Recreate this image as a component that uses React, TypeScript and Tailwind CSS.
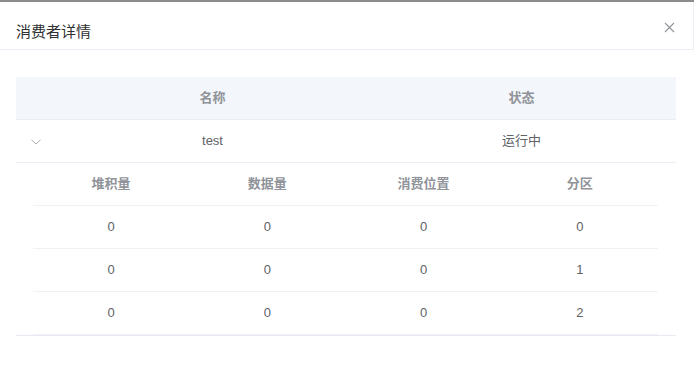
const partitions = [
  { backlog: 0, size: 0, offset: 0, partition: 0 },
  { backlog: 0, size: 0, offset: 0, partition: 1 },
  { backlog: 0, size: 0, offset: 0, partition: 2 },
];

function CloseIcon() {
  return (
    <svg width="11" height="11" viewBox="0 0 11 11" fill="none">
      <path d="M1 1L10 10M10 1L1 10" stroke="#909399" strokeWidth="1.1" />
    </svg>
  );
}

function ChevronDown() {
  return (
    <svg width="10" height="6" viewBox="0 0 10 6" fill="none">
      <path d="M0.5 0.8L5 5L9.5 0.8" stroke="#a8abb2" strokeWidth="1" />
    </svg>
  );
}

export default function App() {
  return (
    <div className="w-[694px] h-[388px] bg-white font-['Liberation_Sans','Noto_Sans_CJK_SC',sans-serif] text-[13px] text-[#606266]">
      <div className="h-[2px] bg-[#8c8c8c]" />

      {/* Dialog header */}
      <div className="h-[48px] flex items-start justify-between pl-4 pr-[18px] border-b border-r border-[#ebeef5]">
        <div className="mt-[19px] leading-[22px] text-[15px] text-[#303133]">消费者详情</div>
        <button className="mt-[20px] flex items-center justify-center">
          <CloseIcon />
        </button>
      </div>

      {/* Table */}
      <div className="pt-[27px] px-4">
        <div className="w-[660px]">
          <div className="grid grid-cols-[42px_1fr_1fr] h-[43px] bg-[#f3f6fa] border-b border-[#ebeef5] font-bold text-[#909399]">
            <div />
            <div className="flex items-center justify-center">名称</div>
            <div className="flex items-center justify-center">状态</div>
          </div>

          <div className="grid grid-cols-[42px_1fr_1fr] h-[43px] border-b border-[#ebeef5]">
            <div className="flex items-center justify-center pt-[1px] pr-[2px]">
              <ChevronDown />
            </div>
            <div className="flex items-center justify-center">test</div>
            <div className="flex items-center justify-center">运行中</div>
          </div>

          {/* Expanded row */}
          <div className="border-b border-[#e8eaf2] pl-[17px] pr-[18px]">
            <div className="grid grid-cols-4 h-[43px] border-b border-[#f0f1f6] font-bold text-[#909399]">
              <div className="flex items-center justify-center">堆积量</div>
              <div className="flex items-center justify-center">数据量</div>
              <div className="flex items-center justify-center">消费位置</div>
              <div className="flex items-center justify-center">分区</div>
            </div>
            {partitions.map((p) => (
              <div key={p.partition} className="grid grid-cols-4 h-[43px] border-b border-[#f0f1f6]">
                <div className="flex items-center justify-center">{p.backlog}</div>
                <div className="flex items-center justify-center">{p.size}</div>
                <div className="flex items-center justify-center">{p.offset}</div>
                <div className="flex items-center justify-center">{p.partition}</div>
              </div>
            ))}
          </div>
        </div>
      </div>
    </div>
  );
}
